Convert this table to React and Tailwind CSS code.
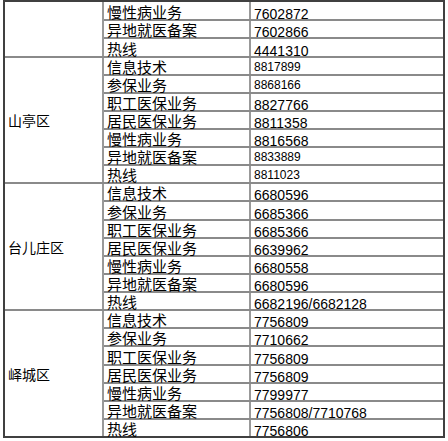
import React from "react";

const groups = [
  {
    name: "",
    w: "flex-[3]",
    rows: [
      ["慢性病业务", "7602872"],
      ["异地就医备案", "7602866"],
      ["热线", "4441310"],
    ],
  },
  {
    name: "山亭区",
    w: "flex-[7]",
    rows: [
      ["信息技术", "8817899", true],
      ["参保业务", "8868166", true],
      ["职工医保业务", "8827766"],
      ["居民医保业务", "8811358"],
      ["慢性病业务", "8816568"],
      ["异地就医备案", "8833889", true],
      ["热线", "8811023", true],
    ],
  },
  {
    name: "台儿庄区",
    w: "flex-[7]",
    rows: [
      ["信息技术", "6680596"],
      ["参保业务", "6685366"],
      ["职工医保业务", "6685366"],
      ["居民医保业务", "6639962"],
      ["慢性病业务", "6680558"],
      ["异地就医备案", "6680596"],
      ["热线", "6682196/6682128"],
    ],
  },
  {
    name: "峄城区",
    w: "flex-[7]",
    rows: [
      ["信息技术", "7756809"],
      ["参保业务", "7710662"],
      ["职工医保业务", "7756809"],
      ["居民医保业务", "7756809"],
      ["慢性病业务", "7799977"],
      ["异地就医备案", "7756808/7710768"],
      ["热线", "7756806"],
    ],
  },
];

const cjk = { fontFamily: '"Noto Sans CJK SC", "Noto Sans", sans-serif' };
const num = { fontFamily: '"Liberation Sans", Arial, sans-serif' };

export default function App() {
  return (
    <div className="w-[448px] h-[441px] bg-white overflow-hidden">
      <div className="ml-[3px] w-[442px] h-[438px] border-2 border-[#404040] flex flex-col text-black">
        {groups.map((g, gi) => (
          <div
            key={gi}
            className={`${g.w} min-h-0 flex ${gi < groups.length - 1 ? "border-b-2 border-[#8a8a8a]" : ""}`}
          >
            <div
              className="w-[99px] shrink-0 border-r-2 border-[#999999] flex items-center pl-[3px] text-[14px] leading-[14px]"
              style={cjk}
            >
              {g.name}
            </div>
            <div className="flex-1 flex flex-col">
              {g.rows.map((r, ri) => (
                <div
                  key={ri}
                  className={`flex-1 min-h-0 flex ${ri < g.rows.length - 1 ? "border-b-2 border-[#8a8a8a]" : ""}`}
                >
                  <div
                    className="w-[147px] shrink-0 border-r-2 border-[#999999] flex items-end pl-[3px] text-[15px] leading-[15px] whitespace-nowrap"
                    style={cjk}
                  >
                    <span>{r[0]}</span>
                  </div>
                  <div className="flex-1 flex items-end pl-[3px] whitespace-nowrap" style={num}>
                    {r[2] ? (
                      <span className="text-[12px] leading-[9px] mb-[2px]">{r[1]}</span>
                    ) : (
                      <span className="text-[14px] leading-[10px]">{r[1]}</span>
                    )}
                  </div>
                </div>
              ))}
            </div>
          </div>
        ))}
      </div>
    </div>
  );
}
